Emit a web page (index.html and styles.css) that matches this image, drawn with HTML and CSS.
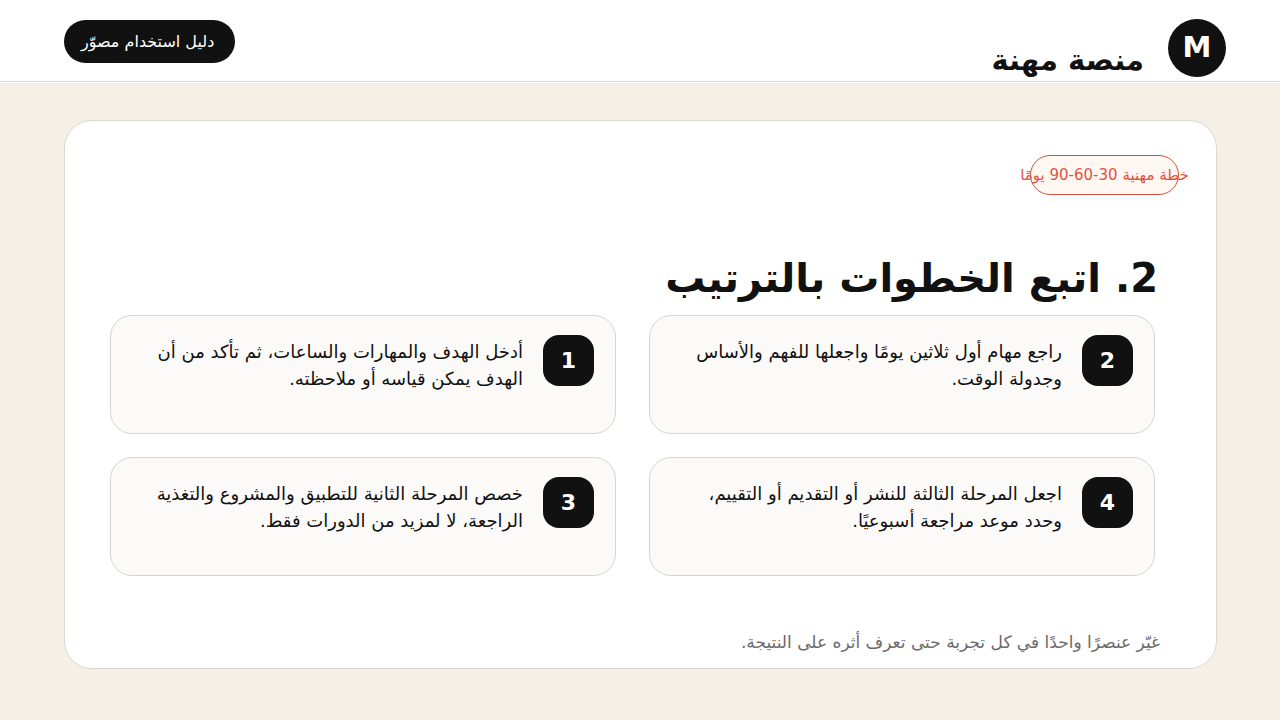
FILE: index.html
```html
<!DOCTYPE html>
<html lang="ar" dir="rtl">
<head>
  <meta charset="UTF-8">
  <meta name="viewport" content="width=device-width, initial-scale=1.0">
  <title>منصة مهنة</title>
  <link rel="stylesheet" href="styles.css">
</head>
<body>
  <header class="header">
    <div class="brand">
      <div class="logo">M</div>
      <div class="brand-name">منصة مهنة</div>
    </div>
    <div class="guide-badge">دليل استخدام مصوّر</div>
  </header>

  <main class="main">
    <section class="panel">
      <div class="tag">خطة مهنية 30-60-90 يومًا</div>
      <h1>2. اتبع الخطوات بالترتيب</h1>
      <div class="steps">
        <div class="step">
          <span class="number">1</span>
          <p>أدخل الهدف والمهارات والساعات، ثم تأكد من أن الهدف يمكن قياسه أو ملاحظته.</p>
        </div>
        <div class="step">
          <span class="number">2</span>
          <p>راجع مهام أول ثلاثين يومًا واجعلها للفهم والأساس وجدولة الوقت.</p>
        </div>
        <div class="step">
          <span class="number">3</span>
          <p>خصص المرحلة الثانية للتطبيق والمشروع والتغذية الراجعة، لا لمزيد من الدورات فقط.</p>
        </div>
        <div class="step">
          <span class="number">4</span>
          <p>اجعل المرحلة الثالثة للنشر أو التقديم أو التقييم، وحدد موعد مراجعة أسبوعيًا.</p>
        </div>
      </div>
      <p class="note">غيّر عنصرًا واحدًا في كل تجربة حتى تعرف أثره على النتيجة.</p>
    </section>
  </main>
</body>
</html>
```

FILE: styles.css
```css
* {
  box-sizing: border-box;
}
body {
  font-family: "DejaVu Sans", sans-serif;
  background-color: #f4f0e6;
  color: #111;
  display: flex;
  flex-direction: column;
  min-height: 100vh;
  margin: 0;
}
.header {
  background-color: #fff;
  border-bottom: 1px solid #d8d8d0;
  box-shadow: 0 1px 0 #fff;
  display: flex;
  justify-content: space-between;
  align-items: flex-start;
  padding: 19px 54px 4px 64px;
}
.brand {
  display: flex;
  align-items: flex-end;
  gap: 24px;
}
.logo {
  width: 58px;
  height: 58px;
  border-radius: 50%;
  background-color: #111;
  color: #fff;
  font-size: 29px;
  font-weight: bold;
  line-height: 56px;
  text-align: center;
}
.brand-name {
  font-size: 29px;
  font-weight: bold;
  line-height: 34px;
}
.guide-badge {
  background-color: #111;
  color: #fff;
  border-radius: 22px;
  margin-top: 1px;
  padding: 1px 21px 0 17px;
  font-size: 16px;
  line-height: 42px;
  white-space: nowrap;
}
.main {
  flex: 1;
  display: flex;
  padding: 38px 63px 51px 64px;
}
.panel {
  flex: 1;
  display: flex;
  flex-direction: column;
  background-color: #fff;
  border: 1px solid #d8d8d0;
  border-radius: 28px;
  padding: 34px 37px 10px 45px;
}
.tag {
  display: flex;
  justify-content: center;
  width: 149px;
  height: 40px;
  border: 1px solid #d2523c;
  border-radius: 20px;
  background-color: #fff7f2;
  color: #e2533c;
  font-size: 15px;
  line-height: 38px;
  white-space: nowrap;
}
h1 {
  margin: 55px 21px 9px 0;
  font-size: 40px;
  line-height: 56px;
}
.steps {
  direction: ltr;
  display: grid;
  grid-template-columns: 1fr 1fr;
  gap: 23px 33px;
  margin-right: 24px;
}
.step {
  direction: rtl;
  display: flex;
  align-items: flex-start;
  gap: 20px;
  min-height: 119px;
  background-color: #fbfaf8;
  border: 1px solid #d5d5d0;
  border-radius: 22px;
  padding: 19px 21px;
}
.number {
  flex: none;
  width: 51px;
  height: 51px;
  border-radius: 16px;
  background-color: #111;
  color: #fff;
  font-size: 22px;
  font-weight: bold;
  line-height: 51px;
  text-align: center;
}
.step p {
  flex: 1;
  margin: 3px 0 0;
  font-size: 18px;
  line-height: 27px;
}
.note {
  margin: auto 19px 0 0;
  color: #6b6b6b;
  font-size: 17px;
  line-height: 32px;
}
```
